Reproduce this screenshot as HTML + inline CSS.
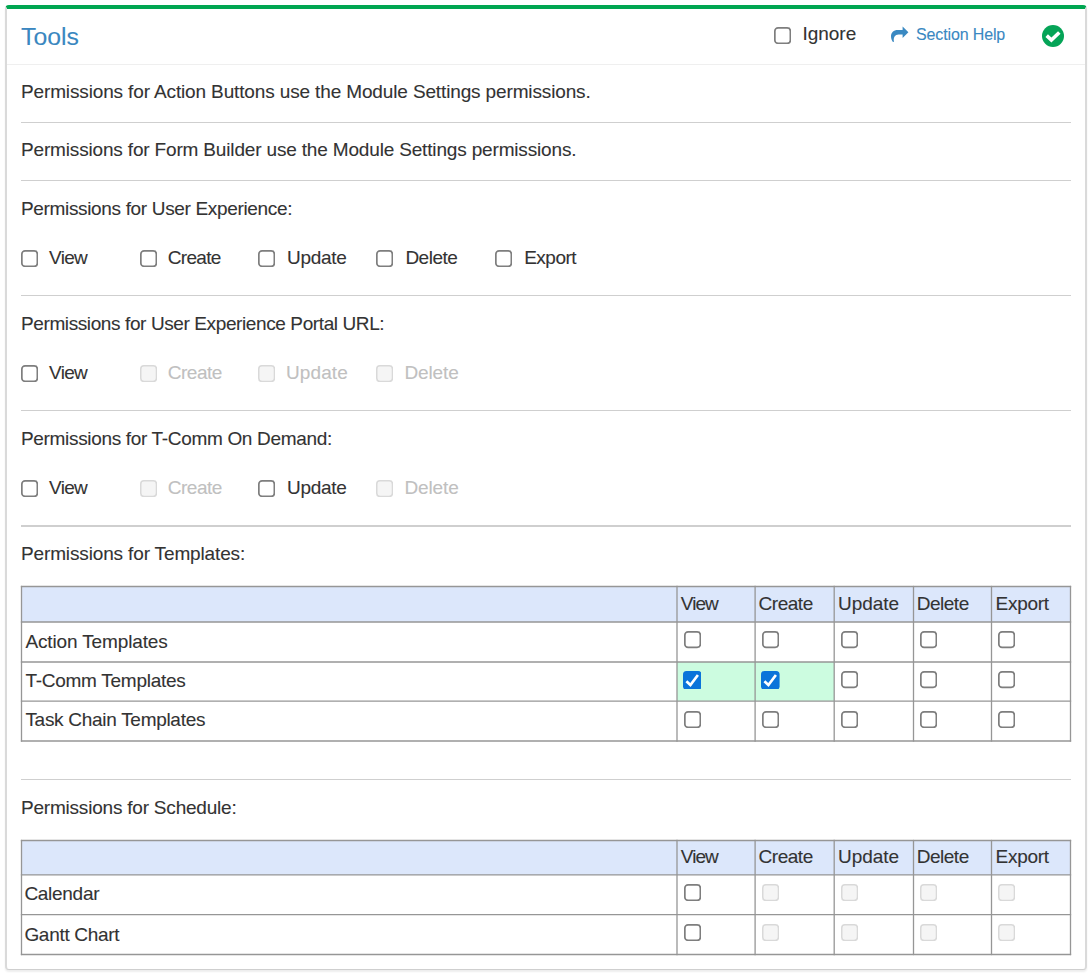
<!DOCTYPE html>
<html><head><meta charset="utf-8"><style>
html,body{margin:0;padding:0;background:#fff;}
body{width:1092px;height:977px;position:relative;overflow:hidden;}
.t{position:absolute;font-family:"Liberation Sans",sans-serif;line-height:1;white-space:nowrap;-webkit-text-stroke:0.1px currentColor;}
</style></head><body>
<div style="position:absolute;left:5px;top:5px;width:1082px;height:965px;box-sizing:border-box;border:2px solid #dadada;border-bottom:1px solid #cfcfcf;border-top:4px solid #00a651;border-radius:4px;box-shadow:0 2px 2px rgba(0,0,0,0.07);background:#fff"></div>
<div id="tools" class="t" style="left:21.00px;top:25.11px;font-size:24.8px;color:#3a87c0;">Tools</div>
<svg style="position:absolute;left:774.20px;top:26.70px" width="17.2" height="17.2"><rect x="0.85" y="0.85" width="15.50" height="15.50" rx="3.2" fill="#fff" stroke="#7e7e7e" stroke-width="1.7"/></svg>
<div id="ignore" class="t" style="left:802.40px;top:24.32px;font-size:19.0px;color:#333333;">Ignore</div>
<svg style="position:absolute;left:886px;top:22px" width="28" height="24" viewBox="0 0 28 24"><path fill="#3a89c2" d="M22.4,10.3 L16.6,4.5 L16.6,7.9 L11.8,7.9 C7.6,7.9 5.0,10.6 5.0,14.2 C5.0,16.6 5.9,18.6 6.9,19.9 C7.5,20.4 8.0,20.0 7.9,19.3 C7.3,15.4 8.9,12.4 12.6,12.4 L16.6,12.4 L16.6,15.9 Z"/></svg>
<div id="help" class="t" style="left:916.00px;top:27.06px;font-size:16.0px;color:#3a88c2;letter-spacing:-0.136px;">Section Help</div>
<svg style="position:absolute;left:1042px;top:25px" width="22" height="22" viewBox="0 0 22 22"><circle cx="11" cy="11" r="11" fill="#05a457"/><polyline points="4.7,10.6 9.4,15.1 17.3,7.5" fill="none" stroke="#fff" stroke-width="3.6"/></svg>
<div style="position:absolute;left:7.00px;top:64.00px;width:1078.00px;height:1.00px;background:#efefef"></div>
<div id="row1" class="t" style="left:21.00px;top:81.92px;font-size:19.0px;color:#333333;letter-spacing:-0.136px;">Permissions for Action Buttons use the Module Settings permissions.</div>
<div style="position:absolute;left:21.00px;top:121.70px;width:1050.00px;height:1.40px;background:#cfcfcf"></div>
<div id="row2" class="t" style="left:21.00px;top:139.92px;font-size:19.0px;color:#333333;letter-spacing:-0.164px;">Permissions for Form Builder use the Module Settings permissions.</div>
<div style="position:absolute;left:21.00px;top:179.80px;width:1050.00px;height:1.40px;background:#cfcfcf"></div>
<div id="ux" class="t" style="left:21.00px;top:198.52px;font-size:19.0px;color:#333333;letter-spacing:-0.339px;">Permissions for User Experience:</div>
<svg style="position:absolute;left:21.30px;top:250.30px" width="17.2" height="17.2"><rect x="0.85" y="0.85" width="15.50" height="15.50" rx="3.2" fill="#fff" stroke="#7e7e7e" stroke-width="1.7"/></svg>
<div id="uxr_0" class="t" style="left:49.00px;top:247.62px;font-size:19.0px;color:#333333;letter-spacing:-0.667px;">View</div>
<svg style="position:absolute;left:139.50px;top:250.30px" width="17.2" height="17.2"><rect x="0.85" y="0.85" width="15.50" height="15.50" rx="3.2" fill="#fff" stroke="#7e7e7e" stroke-width="1.7"/></svg>
<div id="uxr_1" class="t" style="left:167.80px;top:247.62px;font-size:19.0px;color:#333333;letter-spacing:-0.700px;">Create</div>
<svg style="position:absolute;left:257.80px;top:250.30px" width="17.2" height="17.2"><rect x="0.85" y="0.85" width="15.50" height="15.50" rx="3.2" fill="#fff" stroke="#7e7e7e" stroke-width="1.7"/></svg>
<div id="uxr_2" class="t" style="left:287.00px;top:247.62px;font-size:19.0px;color:#333333;letter-spacing:-0.300px;">Update</div>
<svg style="position:absolute;left:376.20px;top:250.30px" width="17.2" height="17.2"><rect x="0.85" y="0.85" width="15.50" height="15.50" rx="3.2" fill="#fff" stroke="#7e7e7e" stroke-width="1.7"/></svg>
<div id="uxr_3" class="t" style="left:405.40px;top:247.62px;font-size:19.0px;color:#333333;letter-spacing:-0.500px;">Delete</div>
<svg style="position:absolute;left:494.50px;top:250.30px" width="17.2" height="17.2"><rect x="0.85" y="0.85" width="15.50" height="15.50" rx="3.2" fill="#fff" stroke="#7e7e7e" stroke-width="1.7"/></svg>
<div id="uxr_4" class="t" style="left:524.20px;top:247.62px;font-size:19.0px;color:#333333;letter-spacing:-0.500px;">Export</div>
<div style="position:absolute;left:21.00px;top:294.60px;width:1050.00px;height:1.40px;background:#cfcfcf"></div>
<div id="portal" class="t" style="left:21.00px;top:313.52px;font-size:19.0px;color:#333333;letter-spacing:-0.393px;">Permissions for User Experience Portal URL:</div>
<svg style="position:absolute;left:21.30px;top:364.80px" width="17.2" height="17.2"><rect x="0.85" y="0.85" width="15.50" height="15.50" rx="3.2" fill="#fff" stroke="#7e7e7e" stroke-width="1.7"/></svg>
<div id="por_0" class="t" style="left:49.00px;top:362.72px;font-size:19.0px;color:#333333;letter-spacing:-0.667px;">View</div>
<svg style="position:absolute;left:139.50px;top:364.80px" width="17.2" height="17.2"><rect x="0.75" y="0.75" width="15.70" height="15.70" rx="3.2" fill="#f5f5f5" stroke="#d9d9d9" stroke-width="1.5"/></svg>
<div id="por_1" class="t" style="left:167.80px;top:362.72px;font-size:19.0px;color:#c0c0c0;letter-spacing:-0.500px;">Create</div>
<svg style="position:absolute;left:257.80px;top:364.80px" width="17.2" height="17.2"><rect x="0.75" y="0.75" width="15.70" height="15.70" rx="3.2" fill="#f5f5f5" stroke="#d9d9d9" stroke-width="1.5"/></svg>
<div id="por_2" class="t" style="left:286.00px;top:362.72px;font-size:19.0px;color:#c0c0c0;letter-spacing:0.100px;">Update</div>
<svg style="position:absolute;left:376.20px;top:364.80px" width="17.2" height="17.2"><rect x="0.75" y="0.75" width="15.70" height="15.70" rx="3.2" fill="#f5f5f5" stroke="#d9d9d9" stroke-width="1.5"/></svg>
<div id="por_3" class="t" style="left:404.40px;top:362.72px;font-size:19.0px;color:#c0c0c0;letter-spacing:-0.100px;">Delete</div>
<div style="position:absolute;left:21.00px;top:410.00px;width:1050.00px;height:1.40px;background:#cfcfcf"></div>
<div id="tcomm" class="t" style="left:21.00px;top:428.92px;font-size:19.0px;color:#333333;letter-spacing:-0.328px;">Permissions for T-Comm On Demand:</div>
<svg style="position:absolute;left:21.30px;top:479.90px" width="17.2" height="17.2"><rect x="0.85" y="0.85" width="15.50" height="15.50" rx="3.2" fill="#fff" stroke="#7e7e7e" stroke-width="1.7"/></svg>
<div id="tcr_0" class="t" style="left:49.00px;top:477.92px;font-size:19.0px;color:#333333;letter-spacing:-0.667px;">View</div>
<svg style="position:absolute;left:139.50px;top:479.90px" width="17.2" height="17.2"><rect x="0.75" y="0.75" width="15.70" height="15.70" rx="3.2" fill="#f5f5f5" stroke="#d9d9d9" stroke-width="1.5"/></svg>
<div id="tcr_1" class="t" style="left:167.80px;top:477.92px;font-size:19.0px;color:#c0c0c0;letter-spacing:-0.500px;">Create</div>
<svg style="position:absolute;left:257.80px;top:479.90px" width="17.2" height="17.2"><rect x="0.85" y="0.85" width="15.50" height="15.50" rx="3.2" fill="#fff" stroke="#7e7e7e" stroke-width="1.7"/></svg>
<div id="tcr_2" class="t" style="left:287.00px;top:477.92px;font-size:19.0px;color:#333333;letter-spacing:-0.300px;">Update</div>
<svg style="position:absolute;left:376.20px;top:479.90px" width="17.2" height="17.2"><rect x="0.75" y="0.75" width="15.70" height="15.70" rx="3.2" fill="#f5f5f5" stroke="#d9d9d9" stroke-width="1.5"/></svg>
<div id="tcr_3" class="t" style="left:404.40px;top:477.92px;font-size:19.0px;color:#c0c0c0;letter-spacing:-0.100px;">Delete</div>
<div style="position:absolute;left:21.00px;top:525.20px;width:1050.00px;height:1.40px;background:#cfcfcf"></div>
<div id="templ" class="t" style="left:21.00px;top:544.42px;font-size:19.0px;color:#333333;letter-spacing:-0.140px;">Permissions for Templates:</div>
<div style="position:absolute;left:21.50px;top:586.50px;width:1049.00px;height:35.50px;background:#dce7fb"></div>
<div style="position:absolute;left:677.00px;top:662.00px;width:78.10px;height:39.10px;background:#ccfce0"></div>
<div style="position:absolute;left:755.10px;top:662.00px;width:79.10px;height:39.10px;background:#ccfce0"></div>
<svg style="position:absolute;left:0;top:0" width="1092" height="977"><g stroke="#969696" stroke-width="1.3"><line x1="20.85" y1="586.5" x2="1071.15" y2="586.5"/><line x1="20.85" y1="622" x2="1071.15" y2="622"/><line x1="20.85" y1="662" x2="1071.15" y2="662"/><line x1="20.85" y1="701.1" x2="1071.15" y2="701.1"/><line x1="20.85" y1="741" x2="1071.15" y2="741"/><line x1="21.5" y1="585.85" x2="21.5" y2="741.65"/><line x1="677" y1="585.85" x2="677" y2="741.65"/><line x1="755.1" y1="585.85" x2="755.1" y2="741.65"/><line x1="834.2" y1="585.85" x2="834.2" y2="741.65"/><line x1="913.5" y1="585.85" x2="913.5" y2="741.65"/><line x1="991.5" y1="585.85" x2="991.5" y2="741.65"/><line x1="1070.5" y1="585.85" x2="1070.5" y2="741.65"/></g></svg>
<div id="ah0" class="t" style="left:680.80px;top:594.12px;font-size:19.0px;color:#333333;letter-spacing:-0.933px;">View</div>
<div id="ah1" class="t" style="left:758.50px;top:594.12px;font-size:19.0px;color:#333333;letter-spacing:-0.460px;">Create</div>
<div id="ah2" class="t" style="left:838.00px;top:594.12px;font-size:19.0px;color:#333333;letter-spacing:-0.020px;">Update</div>
<div id="ah3" class="t" style="left:916.80px;top:594.12px;font-size:19.0px;color:#333333;letter-spacing:-0.500px;">Delete</div>
<div id="ah4" class="t" style="left:995.60px;top:594.12px;font-size:19.0px;color:#333333;letter-spacing:-0.300px;">Export</div>
<div id="an0" class="t" style="left:25.40px;top:632.42px;font-size:19.0px;color:#333333;letter-spacing:-0.133px;">Action Templates</div>
<svg style="position:absolute;left:683.70px;top:631.40px" width="17.2" height="17.2"><rect x="0.85" y="0.85" width="15.50" height="15.50" rx="3.2" fill="#fff" stroke="#7e7e7e" stroke-width="1.7"/></svg>
<svg style="position:absolute;left:761.80px;top:631.40px" width="17.2" height="17.2"><rect x="0.85" y="0.85" width="15.50" height="15.50" rx="3.2" fill="#fff" stroke="#7e7e7e" stroke-width="1.7"/></svg>
<svg style="position:absolute;left:840.90px;top:631.40px" width="17.2" height="17.2"><rect x="0.85" y="0.85" width="15.50" height="15.50" rx="3.2" fill="#fff" stroke="#7e7e7e" stroke-width="1.7"/></svg>
<svg style="position:absolute;left:920.20px;top:631.40px" width="17.2" height="17.2"><rect x="0.85" y="0.85" width="15.50" height="15.50" rx="3.2" fill="#fff" stroke="#7e7e7e" stroke-width="1.7"/></svg>
<svg style="position:absolute;left:998.20px;top:631.40px" width="17.2" height="17.2"><rect x="0.85" y="0.85" width="15.50" height="15.50" rx="3.2" fill="#fff" stroke="#7e7e7e" stroke-width="1.7"/></svg>
<div id="an1" class="t" style="left:25.40px;top:671.42px;font-size:19.0px;color:#333333;letter-spacing:-0.267px;">T-Comm Templates</div>
<svg style="position:absolute;left:682.90px;top:670.50px" width="18.6" height="18.8" viewBox="0 0 18.6 18.8"><rect x="0" y="0" width="18.6" height="18.8" rx="3.5" fill="#0a74da"/><polyline points="3.4,10.3 7.4,14.0 14.9,4.0" fill="none" stroke="#fff" stroke-width="2.7"/></svg>
<svg style="position:absolute;left:761.00px;top:670.50px" width="18.6" height="18.8" viewBox="0 0 18.6 18.8"><rect x="0" y="0" width="18.6" height="18.8" rx="3.5" fill="#0a74da"/><polyline points="3.4,10.3 7.4,14.0 14.9,4.0" fill="none" stroke="#fff" stroke-width="2.7"/></svg>
<svg style="position:absolute;left:840.90px;top:671.40px" width="17.2" height="17.2"><rect x="0.85" y="0.85" width="15.50" height="15.50" rx="3.2" fill="#fff" stroke="#7e7e7e" stroke-width="1.7"/></svg>
<svg style="position:absolute;left:920.20px;top:671.40px" width="17.2" height="17.2"><rect x="0.85" y="0.85" width="15.50" height="15.50" rx="3.2" fill="#fff" stroke="#7e7e7e" stroke-width="1.7"/></svg>
<svg style="position:absolute;left:998.20px;top:671.40px" width="17.2" height="17.2"><rect x="0.85" y="0.85" width="15.50" height="15.50" rx="3.2" fill="#fff" stroke="#7e7e7e" stroke-width="1.7"/></svg>
<div id="an2" class="t" style="left:25.40px;top:709.52px;font-size:19.0px;color:#333333;letter-spacing:-0.289px;">Task Chain Templates</div>
<svg style="position:absolute;left:683.70px;top:710.50px" width="17.2" height="17.2"><rect x="0.85" y="0.85" width="15.50" height="15.50" rx="3.2" fill="#fff" stroke="#7e7e7e" stroke-width="1.7"/></svg>
<svg style="position:absolute;left:761.80px;top:710.50px" width="17.2" height="17.2"><rect x="0.85" y="0.85" width="15.50" height="15.50" rx="3.2" fill="#fff" stroke="#7e7e7e" stroke-width="1.7"/></svg>
<svg style="position:absolute;left:840.90px;top:710.50px" width="17.2" height="17.2"><rect x="0.85" y="0.85" width="15.50" height="15.50" rx="3.2" fill="#fff" stroke="#7e7e7e" stroke-width="1.7"/></svg>
<svg style="position:absolute;left:920.20px;top:710.50px" width="17.2" height="17.2"><rect x="0.85" y="0.85" width="15.50" height="15.50" rx="3.2" fill="#fff" stroke="#7e7e7e" stroke-width="1.7"/></svg>
<svg style="position:absolute;left:998.20px;top:710.50px" width="17.2" height="17.2"><rect x="0.85" y="0.85" width="15.50" height="15.50" rx="3.2" fill="#fff" stroke="#7e7e7e" stroke-width="1.7"/></svg>
<div style="position:absolute;left:21.00px;top:778.80px;width:1050.00px;height:1.40px;background:#cfcfcf"></div>
<div id="sched" class="t" style="left:21.00px;top:798.42px;font-size:19.0px;color:#333333;letter-spacing:-0.208px;">Permissions for Schedule:</div>
<div style="position:absolute;left:21.50px;top:840.50px;width:1049.00px;height:34.30px;background:#dce7fb"></div>
<svg style="position:absolute;left:0;top:0" width="1092" height="977"><g stroke="#969696" stroke-width="1.3"><line x1="20.85" y1="840.5" x2="1071.15" y2="840.5"/><line x1="20.85" y1="874.8" x2="1071.15" y2="874.8"/><line x1="20.85" y1="914.6" x2="1071.15" y2="914.6"/><line x1="20.85" y1="954.5" x2="1071.15" y2="954.5"/><line x1="21.5" y1="839.85" x2="21.5" y2="955.15"/><line x1="677" y1="839.85" x2="677" y2="955.15"/><line x1="755.1" y1="839.85" x2="755.1" y2="955.15"/><line x1="834.2" y1="839.85" x2="834.2" y2="955.15"/><line x1="913.5" y1="839.85" x2="913.5" y2="955.15"/><line x1="991.5" y1="839.85" x2="991.5" y2="955.15"/><line x1="1070.5" y1="839.85" x2="1070.5" y2="955.15"/></g></svg>
<div id="bh0" class="t" style="left:680.80px;top:846.92px;font-size:19.0px;color:#333333;letter-spacing:-0.933px;">View</div>
<div id="bh1" class="t" style="left:758.50px;top:846.92px;font-size:19.0px;color:#333333;letter-spacing:-0.460px;">Create</div>
<div id="bh2" class="t" style="left:838.00px;top:846.92px;font-size:19.0px;color:#333333;letter-spacing:-0.020px;">Update</div>
<div id="bh3" class="t" style="left:916.80px;top:846.92px;font-size:19.0px;color:#333333;letter-spacing:-0.500px;">Delete</div>
<div id="bh4" class="t" style="left:995.60px;top:846.92px;font-size:19.0px;color:#333333;letter-spacing:-0.300px;">Export</div>
<div id="bn0" class="t" style="left:24.40px;top:884.22px;font-size:19.0px;color:#333333;letter-spacing:-0.286px;">Calendar</div>
<svg style="position:absolute;left:683.70px;top:884.20px" width="17.2" height="17.2"><rect x="0.85" y="0.85" width="15.50" height="15.50" rx="3.2" fill="#fff" stroke="#7e7e7e" stroke-width="1.7"/></svg>
<svg style="position:absolute;left:761.80px;top:884.20px" width="17.2" height="17.2"><rect x="0.75" y="0.75" width="15.70" height="15.70" rx="3.2" fill="#f5f5f5" stroke="#d9d9d9" stroke-width="1.5"/></svg>
<svg style="position:absolute;left:840.90px;top:884.20px" width="17.2" height="17.2"><rect x="0.75" y="0.75" width="15.70" height="15.70" rx="3.2" fill="#f5f5f5" stroke="#d9d9d9" stroke-width="1.5"/></svg>
<svg style="position:absolute;left:920.20px;top:884.20px" width="17.2" height="17.2"><rect x="0.75" y="0.75" width="15.70" height="15.70" rx="3.2" fill="#f5f5f5" stroke="#d9d9d9" stroke-width="1.5"/></svg>
<svg style="position:absolute;left:998.20px;top:884.20px" width="17.2" height="17.2"><rect x="0.75" y="0.75" width="15.70" height="15.70" rx="3.2" fill="#f5f5f5" stroke="#d9d9d9" stroke-width="1.5"/></svg>
<div id="bn1" class="t" style="left:24.40px;top:925.02px;font-size:19.0px;color:#333333;letter-spacing:-0.300px;">Gantt Chart</div>
<svg style="position:absolute;left:683.70px;top:924.00px" width="17.2" height="17.2"><rect x="0.85" y="0.85" width="15.50" height="15.50" rx="3.2" fill="#fff" stroke="#7e7e7e" stroke-width="1.7"/></svg>
<svg style="position:absolute;left:761.80px;top:924.00px" width="17.2" height="17.2"><rect x="0.75" y="0.75" width="15.70" height="15.70" rx="3.2" fill="#f5f5f5" stroke="#d9d9d9" stroke-width="1.5"/></svg>
<svg style="position:absolute;left:840.90px;top:924.00px" width="17.2" height="17.2"><rect x="0.75" y="0.75" width="15.70" height="15.70" rx="3.2" fill="#f5f5f5" stroke="#d9d9d9" stroke-width="1.5"/></svg>
<svg style="position:absolute;left:920.20px;top:924.00px" width="17.2" height="17.2"><rect x="0.75" y="0.75" width="15.70" height="15.70" rx="3.2" fill="#f5f5f5" stroke="#d9d9d9" stroke-width="1.5"/></svg>
<svg style="position:absolute;left:998.20px;top:924.00px" width="17.2" height="17.2"><rect x="0.75" y="0.75" width="15.70" height="15.70" rx="3.2" fill="#f5f5f5" stroke="#d9d9d9" stroke-width="1.5"/></svg>
</body></html>
